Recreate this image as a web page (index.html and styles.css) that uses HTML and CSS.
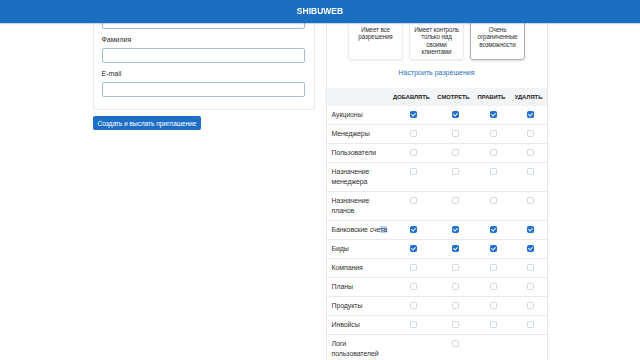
FILE: index.html
```html
<!doctype html>
<html lang="ru">
<head>
	<meta charset="utf-8" />
	<title>Shibuweb - приглашение пользователя</title>
	<link rel="stylesheet" href="styles.css">
</head>
<body>
	<div class="topbar">SHIBUWEB</div>

	<div class="page">
		<!-- левая колонка: данные пользователя -->
		<div class="col-left">
			<div class="card form-card">
				<div class="field">
					<label>Имя</label>
					<input type="text" class="inp" />
				</div>
				<div class="field">
					<label>Фамилия</label>
					<input type="text" class="inp" />
				</div>
				<div class="field">
					<label>E-mail</label>
					<input type="text" class="inp" />
				</div>
			</div>
			<button class="btn">Создать и выслать приглашение</button>
		</div>

		<!-- правая колонка: роль и разрешения -->
		<div class="card perm-card">
			<div class="roles">
				<div class="role">
					<b>Админ</b>
					<p>Имеет все разрешения</p>
				</div>
				<div class="role">
					<b>Менеджер</b>
					<p>Имеет контроль только над своими клиентами</p>
				</div>
				<div class="role selected">
					<b>Гость</b>
					<p>Очень ограниченные возможности</p>
				</div>
			</div>
			<a href="#" class="perm-link">Настроить разрешения</a>

			<table class="perm-table">
				<colgroup>
					<col class="c-name" />
					<col class="c-add" />
					<col class="c-view" />
					<col class="c-edit" />
					<col class="c-del" />
				</colgroup>
				<thead>
					<tr>
						<th></th>
						<th>Добавлять</th>
						<th>Смотреть</th>
						<th>Править</th>
						<th>Удалять</th>
					</tr>
				</thead>
				<tbody>
					<tr>
						<td>Аукционы</td>
						<td><span class="cb on"></span></td>
						<td><span class="cb on"></span></td>
						<td><span class="cb on"></span></td>
						<td><span class="cb on"></span></td>
					</tr>
					<tr>
						<td>Менеджеры</td>
						<td><span class="cb"></span></td>
						<td><span class="cb"></span></td>
						<td><span class="cb"></span></td>
						<td><span class="cb"></span></td>
					</tr>
					<tr>
						<td>Пользователи</td>
						<td><span class="cb"></span></td>
						<td><span class="cb"></span></td>
						<td><span class="cb"></span></td>
						<td><span class="cb"></span></td>
					</tr>
					<tr>
						<td>Назначение менеджера</td>
						<td><span class="cb"></span></td>
						<td><span class="cb"></span></td>
						<td><span class="cb"></span></td>
						<td><span class="cb"></span></td>
					</tr>
					<tr>
						<td>Назначение планов</td>
						<td><span class="cb"></span></td>
						<td><span class="cb"></span></td>
						<td><span class="cb"></span></td>
						<td><span class="cb"></span></td>
					</tr>
					<tr>
						<td class="one-line">Банковские сче<span class="sel">та</span></td>
						<td><span class="cb on"></span></td>
						<td><span class="cb on"></span></td>
						<td><span class="cb on"></span></td>
						<td><span class="cb on"></span></td>
					</tr>
					<tr>
						<td>Биды</td>
						<td><span class="cb on"></span></td>
						<td><span class="cb on"></span></td>
						<td><span class="cb on"></span></td>
						<td><span class="cb on"></span></td>
					</tr>
					<tr>
						<td>Компания</td>
						<td><span class="cb"></span></td>
						<td><span class="cb"></span></td>
						<td><span class="cb"></span></td>
						<td><span class="cb"></span></td>
					</tr>
					<tr>
						<td>Планы</td>
						<td><span class="cb"></span></td>
						<td><span class="cb"></span></td>
						<td><span class="cb"></span></td>
						<td><span class="cb"></span></td>
					</tr>
					<tr>
						<td>Продукты</td>
						<td><span class="cb"></span></td>
						<td><span class="cb"></span></td>
						<td><span class="cb"></span></td>
						<td><span class="cb"></span></td>
					</tr>
					<tr>
						<td>Инвойсы</td>
						<td><span class="cb"></span></td>
						<td><span class="cb"></span></td>
						<td><span class="cb"></span></td>
						<td><span class="cb"></span></td>
					</tr>
					<tr>
						<td>Логи пользователей</td>
						<td></td>
						<td><span class="cb"></span></td>
						<td></td>
						<td></td>
					</tr>
				</tbody>
			</table>
		</div>
	</div>
</body>
</html>
```

FILE: styles.css
```css
* {
	margin: 0;
	padding: 0;
	box-sizing: border-box;
}
html,
body {
	height: 100%;
	overflow: hidden;
}
body {
	font-family: "Liberation Sans", Arial, sans-serif;
	font-size: 7px;
	color: #333;
	background-color: #fff;
}
/* шапка висит поверх прокрученной страницы */
.topbar {
	position: fixed;
	top: 0;
	left: 0;
	right: 0;
	height: 23px;
	line-height: 23px;
	text-align: center;
	font-size: 8.5px;
	font-weight: bold;
	color: #fff;
	background-color: #1b6ec2;
	box-shadow: 0 1px 1px rgba(27, 110, 194, 0.25);
	z-index: 10;
}
/* страница прокручена вниз */
.page {
	width: 455px;
	margin: -8px auto 0;
	display: grid;
	grid-template-columns: 222px 222px;
	column-gap: 11px;
	align-items: start;
}
.card {
	border: 1px solid #e9e9ec;
	border-radius: 3px;
	background-color: #fff;
}
/* *** форма *** */
.form-card {
	padding: 8px 9px 12px 8px;
}
.field + .field {
	margin-top: 6px;
}
.field label {
	display: block;
	line-height: 10px;
	font-weight: 500;
	color: #2b2b2b;
	margin-bottom: 3px;
}
.inp {
	display: block;
	width: 100%;
	height: 15px;
	border: 1px solid #a9bbd0;
	border-radius: 2px;
	background-color: #fff;
	outline: none;
}
.btn {
	margin-top: 6px;
	height: 14px;
	padding: 0 5px;
	font-family: inherit;
	font-size: 6.7px;
	letter-spacing: -0.1px;
	color: #fff;
	background-color: #1c6fc4;
	border: none;
	border-radius: 2px;
}
/* *** разрешения *** */
.perm-card {
	padding-top: 10px;
	overflow: hidden;
}
.roles {
	display: flex;
	justify-content: center;
	gap: 6px;
}
.role {
	width: 55px;
	padding: 4px 2px 3px;
	text-align: center;
	border: 1px solid #ececef;
	border-radius: 3px;
	box-shadow: 0 1px 2px rgba(0, 0, 0, 0.08);
}
.role.selected {
	border-color: #a7afba;
	box-shadow: 0 1px 3px rgba(0, 0, 0, 0.15);
}
.role b {
	display: block;
	line-height: 10px;
	margin-bottom: 7.5px;
}
.role p {
	font-size: 6.3px;
	line-height: 7.6px;
	letter-spacing: -0.15px;
	color: #333;
}
.perm-link {
	display: block;
	margin: 8px 0 10px;
	line-height: 10px;
	text-align: center;
	color: #2a70c0;
	text-decoration: none;
}
.perm-table {
	width: 100%;
	table-layout: fixed;
	border-collapse: collapse;
}
.c-name { width: 64px; }
.c-add { width: 42px; }
.c-view { width: 42px; }
.c-edit { width: 34px; }
.c-del { width: 40px; }
.perm-table th {
	height: 18px;
	padding: 0;
	font-size: 5.8px;
	font-weight: bold;
	text-transform: uppercase;
	white-space: nowrap;
	color: #222;
	background-color: #f3f4f6;
	text-align: center;
}
.perm-table td {
	padding: 4px 2px 4px 5px;
	line-height: 10px;
	letter-spacing: -0.1px;
	vertical-align: top;
	text-align: center;
	border-bottom: 1px solid #e8e8ea;
}
.perm-table td:first-child {
	text-align: left;
}
.perm-table .one-line {
	white-space: nowrap;
}
.sel {
	background-color: #b9d5f3;
}
.cb {
	display: inline-block;
	width: 7px;
	height: 7px;
	vertical-align: middle;
	margin-top: -1px;
	border: 1px solid #cfd7e0;
	border-radius: 1.5px;
	background-color: #fff;
	position: relative;
}
.cb.on {
	border-color: #1f6fd3;
	background-color: #1f6fd3;
}
.cb.on:after {
	content: "";
	position: absolute;
	left: 1.6px;
	top: 0.3px;
	width: 1.6px;
	height: 3px;
	border-right: 1px solid #fff;
	border-bottom: 1px solid #fff;
	transform: rotate(45deg);
}
```
